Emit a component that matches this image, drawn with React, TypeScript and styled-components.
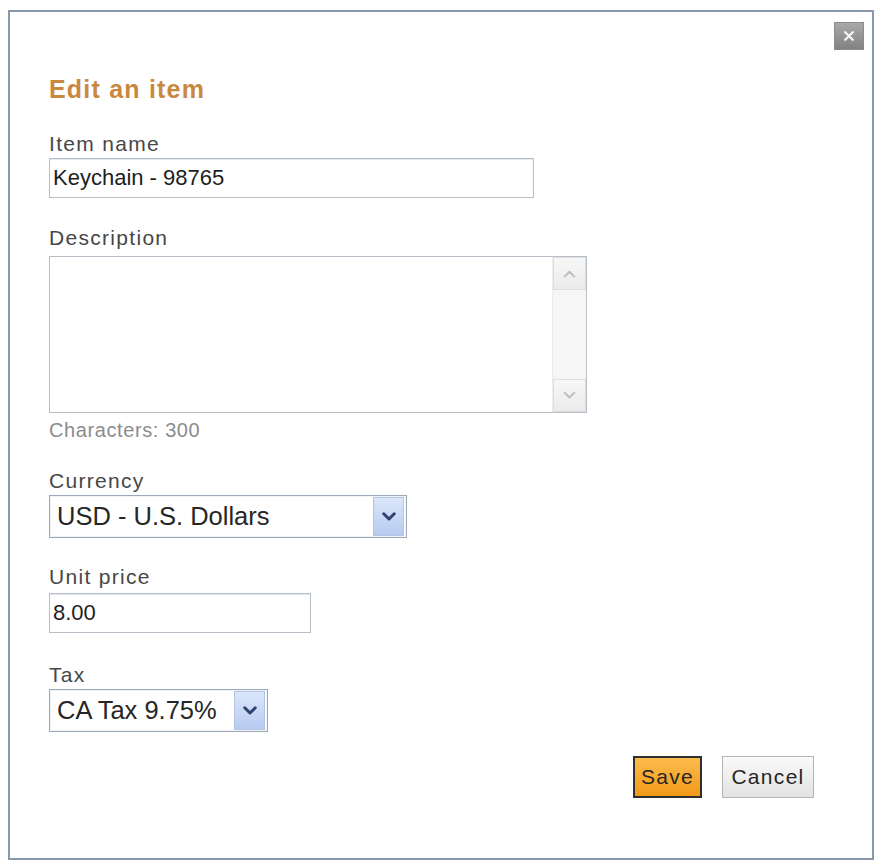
import React from "react";
import styled, { createGlobalStyle } from "styled-components";

const GlobalStyle = createGlobalStyle`
  body {
    margin: 0;
    background: #ffffff;
    font-family: "Liberation Sans", Arial, sans-serif;
  }
`;

const Dialog = styled.div`
  position: relative;
  box-sizing: border-box;
  width: 866px;
  height: 850px;
  margin: 10px 0 0 8px;
  padding: 62px 58px 0 39px;
  border: 2px solid #8a98ab;
  background: #ffffff;
`;

const CloseButton = styled.button`
  position: absolute;
  top: 10px;
  right: 8px;
  width: 30px;
  height: 28px;
  padding: 0;
  display: flex;
  align-items: center;
  justify-content: center;
  border: 1px solid #8c8c8c;
  background: linear-gradient(#a9a9a9, #828282);
  cursor: pointer;
`;

const Title = styled.h2`
  margin: 0;
  font-size: 25px;
  line-height: 30px;
  font-weight: bold;
  letter-spacing: 1.2px;
  color: #c8893f;
`;

const Field = styled.div<{ $top: number }>`
  margin-top: ${(p) => p.$top}px;
  display: flex;
  flex-direction: column;
  align-items: flex-start;
`;

const Label = styled.label<{ $gap: number }>`
  font-size: 21px;
  line-height: 24px;
  letter-spacing: 1.3px;
  color: #474747;
  margin-bottom: ${(p) => p.$gap}px;
`;

const TextInput = styled.input<{ $width: number }>`
  box-sizing: border-box;
  width: ${(p) => p.$width}px;
  height: 40px;
  padding: 0 3px;
  border: 1px solid #b6bec8;
  box-shadow: inset 0 1px 1px #e4e8ec;
  font-family: "Liberation Sans", Arial, sans-serif;
  font-size: 22px;
  color: #1e1e1e;
  outline: none;
`;

const AreaFrame = styled.div`
  box-sizing: border-box;
  width: 538px;
  height: 157px;
  display: flex;
  border: 1px solid #b6bec8;
  background: #ffffff;
`;

const TextArea = styled.textarea`
  flex: 1;
  border: none;
  resize: none;
  outline: none;
  padding: 3px;
  font-family: "Liberation Sans", Arial, sans-serif;
  font-size: 22px;
`;

const ScrollTrack = styled.div`
  width: 33px;
  display: flex;
  flex-direction: column;
  justify-content: space-between;
  background: #f6f6f6;
  border-left: 1px solid #ececec;
`;

const ScrollArrow = styled.div`
  height: 33px;
  display: flex;
  align-items: center;
  justify-content: center;
  background: linear-gradient(#f7f7f7, #ebebeb);
  border: 1px solid #dedede;
  box-sizing: border-box;
`;

const Hint = styled.div`
  margin-top: 6px;
  font-size: 20px;
  line-height: 22px;
  letter-spacing: 0.6px;
  color: #8c8c8c;
`;

const SelectBox = styled.div<{ $width: number }>`
  box-sizing: border-box;
  width: ${(p) => p.$width}px;
  height: 43px;
  display: flex;
  align-items: stretch;
  border: 1px solid #9ea9b8;
  box-shadow: inset 0 0 0 1px #f0f3f7;
  background: #ffffff;
  cursor: pointer;
`;

const SelectValue = styled.span`
  flex: 1;
  display: flex;
  align-items: center;
  padding-left: 7px;
  font-size: 25.5px;
  color: #262626;
  white-space: nowrap;
`;

const SelectArrow = styled.span`
  width: 29px;
  margin: 1px 2px 1px 0;
  display: flex;
  align-items: center;
  justify-content: center;
  background: linear-gradient(#dbe6fa, #b7cbf1);
  border: 1px solid #b3c3e2;
`;

const ButtonRow = styled.div`
  margin-top: 24px;
  display: flex;
  justify-content: flex-end;
  gap: 20px;
`;

const Button = styled.button<{ $primary?: boolean }>`
  box-sizing: border-box;
  height: 42px;
  padding: 0;
  font-family: "Liberation Sans", Arial, sans-serif;
  font-size: 21px;
  letter-spacing: 1.3px;
  color: #262626;
  cursor: pointer;
  width: ${(p) => (p.$primary ? "69px" : "92px")};
  border: ${(p) => (p.$primary ? "2px solid #2f2f2f" : "1px solid #b4b4b4")};
  background: ${(p) =>
    p.$primary
      ? "linear-gradient(#fcbb4d, #f29a17)"
      : "linear-gradient(#fafafa, #e2e2e2)"};
`;

const Chevron = ({
  up,
  color,
  stroke,
  size,
}: {
  up?: boolean;
  color: string;
  stroke: number;
  size: number;
}) => (
  <svg width={size} height={size * 0.7} viewBox="0 0 12 8.4">
    <polyline
      points={up ? "1.5,7 6,2.5 10.5,7" : "1.5,1.5 6,6 10.5,1.5"}
      fill="none"
      stroke={color}
      strokeWidth={stroke}
      strokeLinecap="round"
      strokeLinejoin="round"
    />
  </svg>
);

const Select = ({ value, width }: { value: string; width: number }) => (
  <SelectBox $width={width}>
    <SelectValue>{value}</SelectValue>
    <SelectArrow>
      <Chevron color="#2f4270" stroke={2.6} size={14} />
    </SelectArrow>
  </SelectBox>
);

export default function App() {
  return (
    <>
      <GlobalStyle />
      <Dialog>
        <CloseButton aria-label="Close">
          <svg width="14" height="14" viewBox="0 0 14 14">
            <path d="M2.5 2.5 L11.5 11.5 M11.5 2.5 L2.5 11.5" stroke="#f4f4f4" strokeWidth="2.2" />
          </svg>
        </CloseButton>
        <Title>Edit an item</Title>

        <Field $top={28}>
          <Label $gap={2}>Item name</Label>
          <TextInput $width={485} defaultValue="Keychain - 98765" />
        </Field>

        <Field $top={28}>
          <Label $gap={6}>Description</Label>
          <AreaFrame>
            <TextArea />
            <ScrollTrack>
              <ScrollArrow>
                <Chevron up color="#bdbdbd" stroke={1.8} size={13} />
              </ScrollArrow>
              <ScrollArrow>
                <Chevron color="#bdbdbd" stroke={1.8} size={13} />
              </ScrollArrow>
            </ScrollTrack>
          </AreaFrame>
          <Hint>Characters: 300</Hint>
        </Field>

        <Field $top={28}>
          <Label $gap={2}>Currency</Label>
          <Select value="USD - U.S. Dollars" width={358} />
        </Field>

        <Field $top={27}>
          <Label $gap={4}>Unit price</Label>
          <TextInput $width={262} defaultValue="8.00" />
        </Field>

        <Field $top={30}>
          <Label $gap={2}>Tax</Label>
          <Select value="CA Tax 9.75%" width={219} />
        </Field>

        <ButtonRow>
          <Button $primary>Save</Button>
          <Button>Cancel</Button>
        </ButtonRow>
      </Dialog>
    </>
  );
}
